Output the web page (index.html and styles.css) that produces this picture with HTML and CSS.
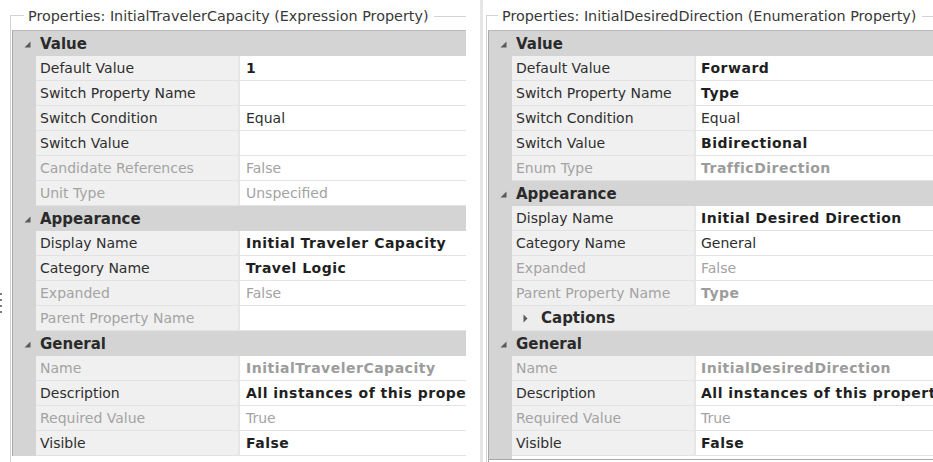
FILE: index.html
```html
<!DOCTYPE html>
<html lang="en">
<head>
<meta charset="utf-8">
<title>Properties</title>
<link rel="stylesheet" href="styles.css">
</head>
<body>
<div class="screen">
  <div class="pane pane-left">
    <div class="grip"></div>
    <section class="group group-left">
      <div class="group-head"><span class="group-title">Properties: InitialTravelerCapacity (Expression Property)</span></div>
      <div class="group-body">
        <div class="pgrid pgrid-left">
          <div class="cat"><svg class="tri" width="7" height="7" viewBox="0 0 7 7"><path d="M6.5 0.5V6.5H0.5Z" fill="#5a5a5a"/></svg>Value</div>
          <div class="gut"></div><div class="lbl">Default Value</div><div class="val b">1</div>
          <div class="gut"></div><div class="lbl">Switch Property Name</div><div class="val"></div>
          <div class="gut"></div><div class="lbl">Switch Condition</div><div class="val">Equal</div>
          <div class="gut"></div><div class="lbl">Switch Value</div><div class="val"></div>
          <div class="gut"></div><div class="lbl dis">Candidate References</div><div class="val dis">False</div>
          <div class="gut"></div><div class="lbl dis">Unit Type</div><div class="val dis">Unspecified</div>
          <div class="cat"><svg class="tri" width="7" height="7" viewBox="0 0 7 7"><path d="M6.5 0.5V6.5H0.5Z" fill="#5a5a5a"/></svg>Appearance</div>
          <div class="gut"></div><div class="lbl">Display Name</div><div class="val b">Initial Traveler Capacity</div>
          <div class="gut"></div><div class="lbl">Category Name</div><div class="val b">Travel Logic</div>
          <div class="gut"></div><div class="lbl dis">Expanded</div><div class="val dis">False</div>
          <div class="gut"></div><div class="lbl dis">Parent Property Name</div><div class="val"></div>
          <div class="cat"><svg class="tri" width="7" height="7" viewBox="0 0 7 7"><path d="M6.5 0.5V6.5H0.5Z" fill="#5a5a5a"/></svg>General</div>
          <div class="gut"></div><div class="lbl dis">Name</div><div class="val b dis">InitialTravelerCapacity</div>
          <div class="gut"></div><div class="lbl">Description</div><div class="val b">All instances of this property</div>
          <div class="gut"></div><div class="lbl dis">Required Value</div><div class="val dis">True</div>
          <div class="gut"></div><div class="lbl">Visible</div><div class="val b">False</div>
        </div>
      </div>
    </section>
  </div>
  <div class="pane pane-right">
    <section class="group group-right">
      <div class="group-head"><span class="group-title">Properties: InitialDesiredDirection (Enumeration Property)</span></div>
      <div class="group-body">
        <div class="pgrid pgrid-right">
          <div class="cat"><svg class="tri" width="7" height="7" viewBox="0 0 7 7"><path d="M6.5 0.5V6.5H0.5Z" fill="#5a5a5a"/></svg>Value</div>
          <div class="gut"></div><div class="lbl">Default Value</div><div class="val b">Forward</div>
          <div class="gut"></div><div class="lbl">Switch Property Name</div><div class="val b">Type</div>
          <div class="gut"></div><div class="lbl">Switch Condition</div><div class="val">Equal</div>
          <div class="gut"></div><div class="lbl">Switch Value</div><div class="val b">Bidirectional</div>
          <div class="gut"></div><div class="lbl dis">Enum Type</div><div class="val b dis">TrafficDirection</div>
          <div class="cat"><svg class="tri" width="7" height="7" viewBox="0 0 7 7"><path d="M6.5 0.5V6.5H0.5Z" fill="#5a5a5a"/></svg>Appearance</div>
          <div class="gut"></div><div class="lbl">Display Name</div><div class="val b">Initial Desired Direction</div>
          <div class="gut"></div><div class="lbl">Category Name</div><div class="val">General</div>
          <div class="gut"></div><div class="lbl dis">Expanded</div><div class="val dis">False</div>
          <div class="gut"></div><div class="lbl dis">Parent Property Name</div><div class="val b dis">Type</div>
          <div class="gut"></div><div class="sub"><svg class="tri-r" width="5" height="9" viewBox="0 0 5 9"><path d="M0.5 0.5L4.5 4.5L0.5 8.5Z" fill="#5a5a5a"/></svg>Captions</div>
          <div class="cat"><svg class="tri" width="7" height="7" viewBox="0 0 7 7"><path d="M6.5 0.5V6.5H0.5Z" fill="#5a5a5a"/></svg>General</div>
          <div class="gut"></div><div class="lbl dis">Name</div><div class="val b dis">InitialDesiredDirection</div>
          <div class="gut"></div><div class="lbl">Description</div><div class="val b">All instances of this property</div>
          <div class="gut"></div><div class="lbl dis">Required Value</div><div class="val dis">True</div>
          <div class="gut"></div><div class="lbl">Visible</div><div class="val b">False</div>
          <div class="tail"></div>
        </div>
      </div>
    </section>
  </div>
</div>
</body>
</html>
```
FILE: styles.css
```css
* { box-sizing: border-box; }
html, body { margin: 0; padding: 0; background: #ffffff; }
body {
  font-family: "DejaVu Sans", "Noto Sans", sans-serif;
  font-size: 14px;
  color: #2e2e2e;
}
.screen {
  display: flex;
  width: 933px;
  height: 462px;
  overflow: hidden;
}
.pane { display: flex; }
.pane-left { width: 466px; flex: none; }
.pane-right {
  flex: 1;
  min-width: 0;
  margin-left: 14px;
  border-left: 3px solid #e6e6e6;
  padding-left: 3px;
}
.grip {
  flex: none;
  width: 2px;
  height: 23px;
  margin-top: 293px;
  background: repeating-linear-gradient(to bottom, #7c7c7c 0 2px, transparent 2px 6px);
}
.group {
  flex: 1;
  min-width: 0;
  display: flex;
  flex-direction: column;
}
.group-left { margin-left: 8px; }
.group-head {
  display: flex;
  height: 16px;
  margin-top: 8px;
  flex: none;
}
.group-head::before {
  content: "";
  flex: none;
  align-self: flex-end;
  width: 13px;
  height: 8px;
  border-top: 1px solid #d2d2d2;
  border-left: 1px solid #d2d2d2;
}
.group-right .group-head::before { width: 11px; }
.group-head::after {
  content: "";
  flex: 1;
  align-self: flex-start;
  margin-top: 8px;
  border-top: 1px solid #d2d2d2;
}
.group-title {
  padding: 0 6px 0 4px;
  font-size: 14.35px;
  line-height: 16px;
  white-space: nowrap;
  color: #383838;
}
.group-body {
  flex: 1;
  min-height: 0;
  border-left: 1px solid #d2d2d2;
  padding: 6px 0 0 1px;
  overflow: hidden;
}
.pgrid {
  display: grid;
  grid-template-columns: 23px 204px 1fr;
  grid-auto-rows: 25px;
  border-top: 1px solid #b8b8b8;
  border-left: 1px solid #a9a9a9;
}
.pgrid-right { grid-template-columns: 23px 184px 1fr; }
.cat {
  grid-column: 1 / -1;
  display: flex;
  align-items: center;
  padding-left: 11px;
  background: #d4d4d4;
  font-size: 15px;
  font-weight: bold;
  color: #2a2a2a;
  white-space: nowrap;
}
.tri { flex: none; margin-right: 9px; margin-top: 1px; }
.gut { background: #d4d4d4; }
.lbl {
  background: #f0f0f0;
  border-bottom: 1px solid #e3e3e3;
  border-right: 2px solid #e6e6e6;
  padding-left: 4px;
  line-height: 24px;
  white-space: nowrap;
  overflow: hidden;
}
.val {
  background: #ffffff;
  border-bottom: 1px solid #e3e3e3;
  padding-left: 6px;
  line-height: 24px;
  white-space: nowrap;
  overflow: hidden;
}
.pgrid-right .val { padding-left: 5px; }
.b { font-weight: bold; letter-spacing: 0.5px; color: #1f1f1f; }
.dis { color: #a3a3a3; }
.b.dis { color: #9c9c9c; }
.sub {
  grid-column: 2 / -1;
  display: flex;
  align-items: center;
  padding-left: 11px;
  background: #ededed;
  border-bottom: 1px solid #e3e3e3;
  font-size: 15px;
  font-weight: bold;
  color: #2a2a2a;
}
.tri-r { flex: none; margin-right: 13px; }
.tail {
  grid-column: 1 / -1;
  background:
    linear-gradient(#d4d4d4, #d4d4d4) 0 0 / 23px 3px no-repeat,
    linear-gradient(#a8a8a8, #a8a8a8) 0 3px / 100% 1px no-repeat;
}
```
